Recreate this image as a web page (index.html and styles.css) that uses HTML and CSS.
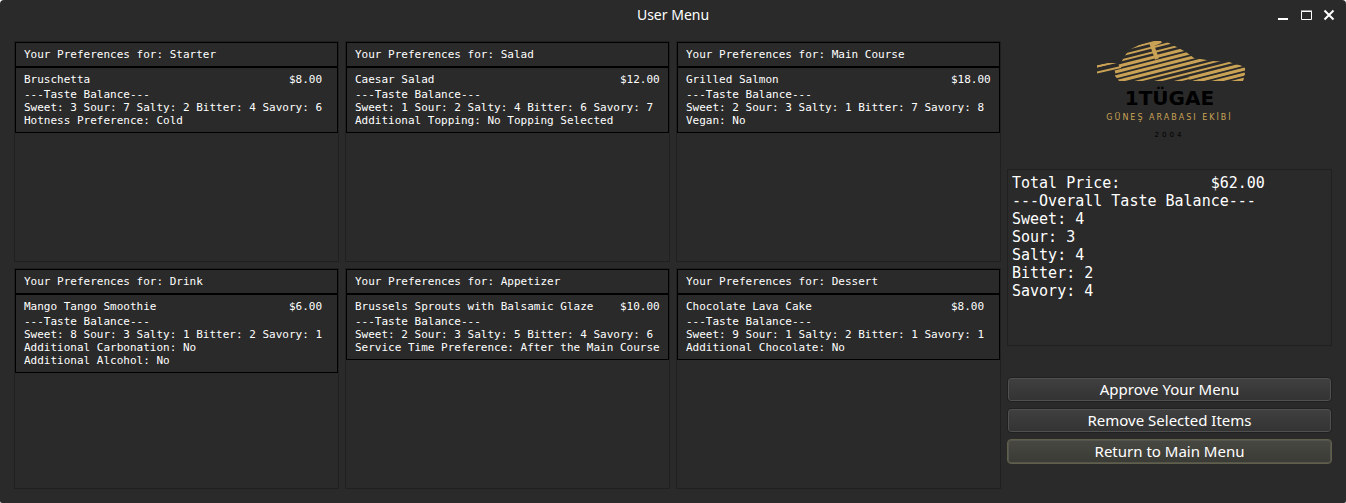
FILE: index.html
```html
<!DOCTYPE html>
<html lang="en">
<head>
<meta charset="utf-8">
<title>User Menu</title>
<link rel="stylesheet" href="styles.css">
</head>
<body>
<div class="window">
  <header class="titlebar">
    <h1 class="title">User Menu</h1>
    <div class="controls">
      <button class="control" aria-label="Minimize"><svg viewBox="0 0 12 12"><path d="M1 10h10" stroke-width="2"/></svg></button>
      <button class="control" aria-label="Maximize"><svg viewBox="0 0 12 12"><path d="M1.5 2.5h10v8h-10z M1 2h11" stroke-width="1"/></svg></button>
      <button class="control" aria-label="Close"><svg viewBox="0 0 12 12"><path d="M1.500 1.500l9 9M10.500 1.500l-9 9" stroke-width="2"/></svg></button>
    </div>
  </header>
  <main class="layout">
    <section class="panel starter">
      <h2 class="heading">Your Preferences for: Starter</h2>
      <div class="details">
        <p class="item"><span>Bruschetta</span><span>$8.00</span></p>
        <p>---Taste Balance---</p>
        <p>Sweet: 3 Sour: 7 Salty: 2 Bitter: 4 Savory: 6</p>
        <p>Hotness Preference: Cold</p>
      </div>
    </section>
    <section class="panel salad">
      <h2 class="heading">Your Preferences for: Salad</h2>
      <div class="details">
        <p class="item"><span>Caesar Salad</span><span>$12.00</span></p>
        <p>---Taste Balance---</p>
        <p>Sweet: 1 Sour: 2 Salty: 4 Bitter: 6 Savory: 7</p>
        <p>Additional Topping: No Topping Selected</p>
      </div>
    </section>
    <section class="panel main-course">
      <h2 class="heading">Your Preferences for: Main Course</h2>
      <div class="details">
        <p class="item"><span>Grilled Salmon</span><span>$18.00</span></p>
        <p>---Taste Balance---</p>
        <p>Sweet: 2 Sour: 3 Salty: 1 Bitter: 7 Savory: 8</p>
        <p>Vegan: No</p>
      </div>
    </section>
    <section class="panel drink">
      <h2 class="heading">Your Preferences for: Drink</h2>
      <div class="details">
        <p class="item"><span>Mango Tango Smoothie</span><span>$6.00</span></p>
        <p>---Taste Balance---</p>
        <p>Sweet: 8 Sour: 3 Salty: 1 Bitter: 2 Savory: 1</p>
        <p>Additional Carbonation: No</p>
        <p>Additional Alcohol: No</p>
      </div>
    </section>
    <section class="panel appetizer">
      <h2 class="heading">Your Preferences for: Appetizer</h2>
      <div class="details">
        <p class="item"><span>Brussels Sprouts with Balsamic Glaze</span><span>$10.00</span></p>
        <p>---Taste Balance---</p>
        <p>Sweet: 2 Sour: 3 Salty: 5 Bitter: 4 Savory: 6</p>
        <p>Service Time Preference: After the Main Course</p>
      </div>
    </section>
    <section class="panel dessert">
      <h2 class="heading">Your Preferences for: Dessert</h2>
      <div class="details">
        <p class="item"><span>Chocolate Lava Cake</span><span>$8.00</span></p>
        <p>---Taste Balance---</p>
        <p>Sweet: 9 Sour: 1 Salty: 2 Bitter: 1 Savory: 1</p>
        <p>Additional Chocolate: No</p>
      </div>
    </section>
    <aside class="side">
      <div class="brand">
        <svg class="car" viewBox="0 0 150 42" aria-hidden="true">
          <defs>
            <clipPath id="body">
              <path d="M2 24L14 22L26 22L29 16L34 9L44 4L57 0H70L76 3L91 11L99 17L118 20L134 21L150 26V32L148 40H24L17 31L2 33Z"/>
            </clipPath>
          </defs>
          <g clip-path="url(#body)" fill="none" stroke="#c9a255">
            <path stroke-width="2" d="M0 16l150 -38M0 21l150 -38M0 26l150 -38M0 51l150 -38M0 56l150 -38M0 61l150 -38M0 66l150 -38M0 71l150 -38M0 76l150 -38"/>
            <path stroke-width="3" d="M24 25l126 -32M20 31l130 -33M20 36l130 -33M20 41l130 -33"/>
            <path stroke-width="2" d="M0 26l26 -6M0 32l26 -6"/>
            <path stroke-width="3" d="M94 37.200l56 -14.200M98 41.200l52 -13.200M110 43.100l40 -10.100M120 45.600l30 -7.600"/>
            <path stroke-width="4" d="M66 0L57 4L62 18"/>
          </g>
        </svg>
        <p class="wordmark">1TÜGAE</p>
        <p class="tagline">GÜNEŞ ARABASI EKİBİ</p>
        <p class="year">2004</p>
      </div>
      <div class="summary">
        <p class="total"><span>Total Price:</span><span>$62.00</span></p>
        <p>---Overall Taste Balance---</p>
        <p>Sweet: 4</p>
        <p>Sour: 3</p>
        <p>Salty: 4</p>
        <p>Bitter: 2</p>
        <p>Savory: 4</p>
      </div>
      <div class="actions">
        <button class="action">Approve Your Menu</button>
        <button class="action">Remove Selected Items</button>
        <button class="action active">Return to Main Menu</button>
      </div>
    </aside>
  </main>
</div>
</body>
</html>
```

FILE: styles.css
```css
* { box-sizing: border-box; }
body { margin: 0; background: #fff; color: #fff; }
p, h1, h2 { margin: 0; font-weight: normal; }
.window {
  min-height: 100vh;
  display: flex;
  flex-direction: column;
  background: #2a2a2a;
  border-radius: 4px 4px 2px 2px;
}
.titlebar {
  display: grid;
  grid-template-columns: 1fr auto 1fr;
  align-items: center;
  height: 30px;
  padding: 0 11px;
}
.title {
  grid-column: 2;
  font: 14px/20px "Noto Sans", sans-serif;
}
.controls { display: flex; justify-content: flex-end; gap: 11px; }
.control { width: 12px; height: 12px; padding: 0; border: 0; background: none; }
.control svg { display: block; width: 12px; height: 12px; fill: none; stroke: #fff; }
.layout {
  flex: 1;
  display: grid;
  grid-template-columns: repeat(4, 1fr);
  grid-template-rows: 1fr 1fr;
  gap: 6px;
  padding: 11px 14px 14px;
}
.panel {
  border: 1px solid #202020;
  font: 11px/13px "DejaVu Sans Mono", monospace;
  white-space: nowrap;
}
.heading { padding: 5px 8px; border: 1px solid #000; font: inherit; }
.details { padding: 5px 8px; border: 1px solid #000; }
.item { display: grid; grid-template-columns: 40ch auto; margin-bottom: 2px; }
.side {
  grid-column: 4;
  grid-row: 1 / 3;
  display: grid;
  grid-template-rows: 122fr 177fr 137fr;
  gap: 6px;
}
.brand { display: flex; flex-direction: column; align-items: center; }
.car { width: 150px; height: 42px; }
.wordmark {
  margin-top: 3px;
  color: #000;
  font: bold 20px/24px "DejaVu Sans", sans-serif;
}
.tagline {
  color: #c9a255;
  font: 8px/12px "DejaVu Sans", sans-serif;
  letter-spacing: 2px;
  margin-top: 2px;
}
.year {
  color: #000;
  font: 7px/10px "DejaVu Sans", sans-serif;
  letter-spacing: 3px;
  margin-top: 6px;
}
.summary {
  padding: 4px;
  border: 1px solid #202020;
  font: 15px/18px "DejaVu Sans Mono", monospace;
}
.total { display: grid; grid-template-columns: 22ch auto; }
.actions { display: flex; flex-direction: column; justify-content: center; gap: 6px; }
.action {
  height: 25px;
  padding: 0 0 2px;
  border: 1px solid #202020;
  border-radius: 4px;
  background: linear-gradient(#404040, #333);
  box-shadow: inset 0 0 0 1px #505050;
  color: #fff;
  font: 15px/20px "Noto Sans", sans-serif;
}
.active {
  border-color: #5f5f4a;
  background: linear-gradient(#484842, #3b3b36);
  box-shadow: inset 0 0 0 1px #55554d;
}
```
